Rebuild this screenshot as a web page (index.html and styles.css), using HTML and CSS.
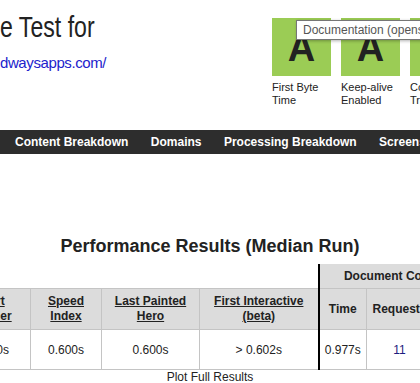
FILE: index.html
```html
<!DOCTYPE html>
<html lang="en">
<head>
    <meta charset="UTF-8">
    <title>WebPagetest Test Result</title>
    <link rel="stylesheet" href="styles.css">
</head>
<body>
    <div class="page">
        <div class="top">
            <div class="site">
                <h1 class="test-title">e Test for</h1>
                <a class="test-url" href="#">dwaysapps.com/</a>
            </div>
            <div class="grades">
                <div class="grade">
                    <div class="grade-box">A</div>
                    <div class="grade-label">First Byte<br>Time</div>
                </div>
                <div class="grade">
                    <div class="grade-box">A</div>
                    <div class="grade-label">Keep-alive<br>Enabled</div>
                </div>
                <div class="grade">
                    <div class="grade-box">A</div>
                    <div class="grade-label">Compress<br>Transfer</div>
                </div>
            </div>
            <div class="tooltip">Documentation (opens in a new window)</div>
        </div>

        <!-- tabs -->
        <div class="nav">
            <a href="#">Content Breakdown</a>
            <a href="#">Domains</a>
            <a href="#">Processing Breakdown</a>
            <a href="#">Screenshot</a>
        </div>

        <h2 class="results-title">Performance Results (Median Run)</h2>
        <div class="results">
            <table class="perf">
                <colgroup>
                    <col class="c-render">
                    <col class="c-speed">
                    <col class="c-hero">
                    <col class="c-inter">
                    <col class="c-time">
                    <col class="c-req">
                    <col class="c-bytes">
                </colgroup>
                <tr class="group-row">
                    <td class="empty" colspan="4"></td>
                    <th class="group" colspan="3">Document Complete</th>
                </tr>
                <tr class="head-row">
                    <th><a href="#">Start<br>Render</a></th>
                    <th><a href="#">Speed<br>Index</a></th>
                    <th><a href="#">Last Painted<br>Hero</a></th>
                    <th><a href="#">First Interactive<br>(beta)</a></th>
                    <th class="split">Time</th>
                    <th>Requests</th>
                    <th>Bytes In</th>
                </tr>
                <tr class="data-row">
                    <td>0.600s</td>
                    <td>0.600s</td>
                    <td>0.600s</td>
                    <td>&gt; 0.602s</td>
                    <td class="split">0.977s</td>
                    <td class="req">11</td>
                    <td>38 KB</td>
                </tr>
            </table>
        </div>
        <div class="plot"><a href="#">Plot Full Results</a></div>
    </div>
</body>
</html>
```

FILE: styles.css
```css
body {
    margin: 0;
    font-family: "Liberation Sans", Arial, sans-serif;
    color: #222;
    overflow: hidden;
}
.page {
    width: 420px;
    overflow: hidden;
}
.top {
    position: relative;
    display: flex;
}
.site {
    flex: 0 0 272px;
    padding-top: 10px;
}
.test-title {
    margin: 0;
    font-weight: normal;
    font-size: 30px;
    line-height: 34px;
    color: #222;
    white-space: nowrap;
    transform: scaleX(0.77);
    transform-origin: left center;
}
.test-url {
    display: block;
    margin-top: 10px;
    font-size: 15px;
    letter-spacing: -0.4px;
    line-height: 18px;
    color: #2222cc;
    text-decoration: none;
}
.grades {
    display: flex;
    flex-shrink: 0;
    gap: 10px;
    margin-top: 18px;
}
.grade {
    width: 59px;
}
.grade-box {
    box-sizing: border-box;
    height: 58px;
    padding-top: 12px;
    background: #9bcc55;
    color: #222;
    font-weight: bold;
    font-size: 38px;
    line-height: 36px;
    text-align: center;
}
.grade-label {
    margin-top: 5px;
    font-size: 11px;
    line-height: 13px;
    white-space: nowrap;
}
.tooltip {
    position: absolute;
    left: 296px;
    top: 20px;
    height: 18px;
    padding: 0 6px;
    border: 1px solid #767676;
    background: #fff;
    box-shadow: 1px 1px 3px rgba(0,0,0,0.3);
    font-size: 12px;
    line-height: 18px;
    color: #555;
    white-space: nowrap;
}
.nav {
    margin-top: 23px;
    height: 24px;
    padding-left: 4px;
    background: #2d2d2d;
    white-space: nowrap;
}
.nav a {
    display: inline-block;
    padding: 0 11px;
    margin-right: -4px;
    color: #fff;
    font-weight: bold;
    font-size: 12px;
    line-height: 24px;
    text-decoration: none;
}
.results-title {
    margin: 81px 0 7px;
    font-size: 18px;
    line-height: 22px;
    text-align: center;
    color: #222;
}
.results {
    overflow: hidden;
}
.perf {
    margin-left: -49px;
    border-collapse: collapse;
    table-layout: fixed;
    width: 534px;
    font-size: 12px;
}
.c-render { width: 79px; }
.c-speed { width: 71px; }
.c-hero { width: 98px; }
.c-inter { width: 119px; }
.c-time { width: 48px; }
.c-req { width: 66px; }
.c-bytes { width: 53px; }
.perf th,
.perf td {
    border: 1px solid #c4c4c4;
    text-align: center;
    padding: 0;
    white-space: nowrap;
}
.perf th {
    background: #dcdcdc;
    font-weight: bold;
}
.perf th a {
    color: #222;
}
.perf td.empty {
    border: none;
    background: #fff;
}
.group-row th {
    height: 24px;
    border-top: none;
}
.perf .group {
    border-left: 2px solid #000;
}
.head-row th {
    height: 40px;
    line-height: 15px;
}
.data-row td {
    height: 39px;
    background: #fff;
}
.perf .split {
    border-left: 2px solid #000;
}
.req {
    color: #1c1c80;
}
.plot {
    text-align: center;
    font-size: 12px;
    line-height: 14px;
}
.plot a {
    color: #222;
    text-decoration: none;
}
```
